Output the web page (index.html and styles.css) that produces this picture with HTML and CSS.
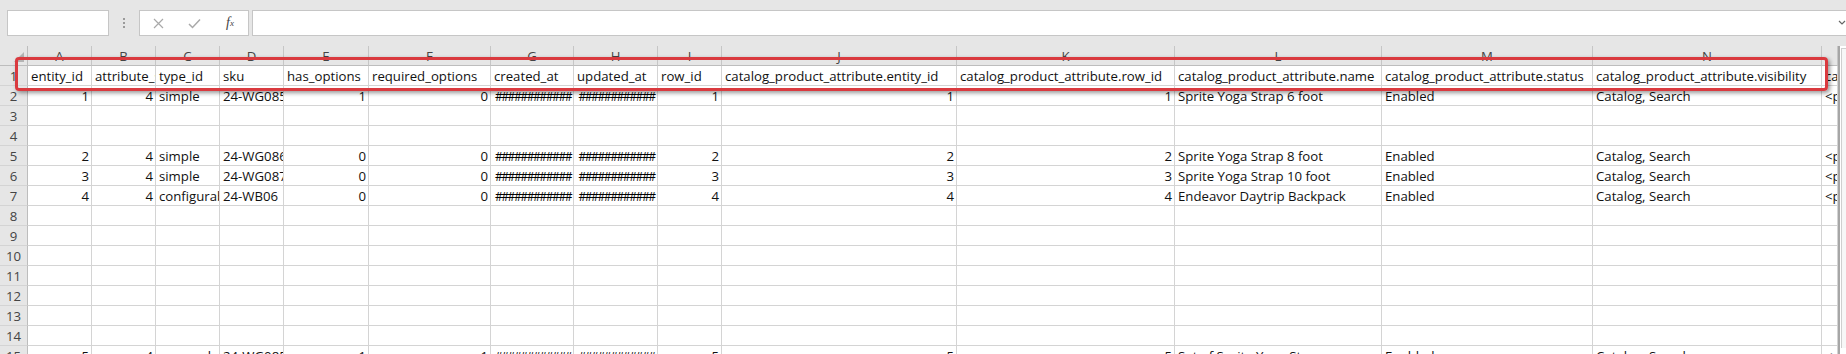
FILE: index.html
```html
<!DOCTYPE html>
<html lang="en">
<head>
  <meta charset="UTF-8" />
  <title>Book1 - Excel</title>
  <link rel="stylesheet" href="styles.css">
</head>
<body>

<div class="app">
  <!-- Formula bar -->
  <div class="formula-bar">
    <div class="name-box"></div>
    <div class="grip"><span></span><span></span><span></span></div>
    <div class="fx-buttons">
      <span class="fx-btn">
        <svg width="11" height="11" viewBox="0 0 11 11"><path d="M1 1 L10 10 M10 1 L1 10" stroke="#a9a9a9" stroke-width="1.2" fill="none"/></svg>
      </span>
      <span class="fx-btn">
        <svg width="13" height="11" viewBox="0 0 13 11"><path d="M1 6 L4.5 9.5 L12 1.5" stroke="#a9a9a9" stroke-width="1.5" fill="none"/></svg>
      </span>
      <span class="fx-btn fx">f<sub>x</sub></span>
    </div>
    <div class="formula-input">
      <svg width="8" height="6" viewBox="0 0 8 6"><path d="M1 1 L4 4 L7 1" stroke="#666" stroke-width="1.2" fill="none"/></svg>
    </div>
  </div>

  <!-- Sheet -->
  <div class="workspace">
    <div class="sheet" id="sheet"></div>
    <div class="vscroll"><div class="vscroll-btn"></div></div>
  </div>

  <!-- annotation -->
  <div class="highlight"></div>
</div>

<script>
  const sheet = document.getElementById("sheet");
  const letters = "ABCDEFGHIJKLMNO".split("");
  const H = "#";
  const data = {
    1: ["entity_id", "attribute_set_id", "type_id", "sku", "has_options", "required_options", "created_at", "updated_at", "row_id",
        "catalog_product_attribute.entity_id", "catalog_product_attribute.row_id", "catalog_product_attribute.name",
        "catalog_product_attribute.status", "catalog_product_attribute.visibility", "catalog_product_attribute.description"],
    2: [1, 4, "simple", "24-WG085", 1, 0, H, H, 1, 1, 1, "Sprite Yoga Strap 6 foot", "Enabled", "Catalog, Search", "<p>The Sprite Yoga Strap"],
    5: [2, 4, "simple", "24-WG086", 0, 0, H, H, 2, 2, 2, "Sprite Yoga Strap 8 foot", "Enabled", "Catalog, Search", "<p>The Sprite Yoga Strap"],
    6: [3, 4, "simple", "24-WG087", 0, 0, H, H, 3, 3, 3, "Sprite Yoga Strap 10 foot", "Enabled", "Catalog, Search", "<p>The Sprite Yoga Strap"],
    7: [4, 4, "configurable", "24-WB06", 0, 0, H, H, 4, 4, 4, "Endeavor Daytrip Backpack", "Enabled", "Catalog, Search", "<p>With more room"],
    15: [5, 4, "grouped", "24-WG085_Group", 1, 1, H, H, 5, 5, 5, "Set of Sprite Yoga Straps", "Enabled", "Catalog, Search", "<p>Great set of"]
  };

  function addCell(cls, text) {
    const d = document.createElement("div");
    d.className = "cell " + cls;
    d.textContent = text;
    sheet.appendChild(d);
  }

  // column headers (last one is cut by the window, its letter sits off screen)
  const corner = document.createElement("div");
  corner.className = "cell corner";
  corner.innerHTML = '<span class="select-all"></span>';
  sheet.appendChild(corner);
  letters.forEach((l, i) => addCell("col-head", i < letters.length - 1 ? l : ""));

  // rows
  for (let r = 1; r <= 15; r++) {
    addCell("row-head", r);
    const row = data[r] || [];
    for (let c = 0; c < letters.length; c++) {
      const v = row[c];
      if (v === undefined) addCell("", "");
      else if (v === H) addCell("hash", "############");
      else if (typeof v === "number") addCell("num", v);
      else addCell("text", v);
    }
  }
</script>

</body>
</html>
```

FILE: styles.css
```css
* { box-sizing: border-box; }

body {
  margin: 0;
  background: #fff;
  font-family: "Open Sans", sans-serif;
  font-size: 13.2px;
  color: #111;
  overflow: hidden;
}

.app {
  position: relative;
  width: 1846px;
  height: 354px;
  overflow: hidden;
}

/* formula bar */
.formula-bar {
  height: 46px;
  background: #e6e6e6;
  display: flex;
  align-items: flex-start;
  padding: 10px 0 0 7px;
}

.name-box {
  width: 102px;
  height: 26px;
  background: #fff;
  border: 1px solid #c6c6c6;
}

.grip {
  width: 30px;
  height: 26px;
  display: flex;
  flex-direction: column;
  align-items: center;
  justify-content: center;
  gap: 2px;
}

.grip span {
  width: 2px;
  height: 2px;
  background: #9a9a9a;
}

.fx-buttons {
  width: 110px;
  height: 26px;
  background: #fff;
  border: 1px solid #c6c6c6;
  display: flex;
  align-items: center;
}

.fx-btn {
  width: 36px;
  display: flex;
  justify-content: center;
  align-items: center;
}

.fx {
  font-family: "Liberation Serif", serif;
  font-style: italic;
  font-size: 14px;
  color: #444;
  line-height: 14px;
}

.fx sub {
  font-size: 9px;
  vertical-align: -1px;
}

.formula-input {
  flex-grow: 1;
  margin-left: 3px;
  height: 26px;
  background: #fff;
  border: 1px solid #c6c6c6;
  border-right: none;
  display: flex;
  justify-content: flex-end;
  align-items: center;
}

/* sheet grid */
.workspace {
  display: flex;
}

.sheet {
  width: 1838px;
  display: grid;
  grid-template-columns: 28px 64px 64px 64px 64px 85px 122px 83px 84px 64px 235px 218px 207px 211px 229px 16px;
  grid-auto-rows: 20px;
}

.cell {
  border-right: 1px solid #d4d4d4;
  border-bottom: 1px solid #d4d4d4;
  padding: 0 2px 0 3px;
  line-height: 20px;
  white-space: nowrap;
  overflow: hidden;
}

.num { text-align: right; }

.hash {
  text-align: center;
  font-size: 12px;
  letter-spacing: -1.4px;
  line-height: 21px;
  padding: 0 0 0 2px;
  color: #000;
}

.col-head, .row-head, .corner {
  background: #e6e6e6;
  color: #444;
  text-align: center;
  padding: 0;
}

.col-head {
  border-right-color: #c6c6c6;
  border-bottom-color: #bdbdbd;
}

.row-head {
  border-right-color: #bdbdbd;
  border-bottom-color: #d4d4d4;
}

.corner {
  display: flex;
  justify-content: flex-end;
  align-items: flex-end;
  padding: 0 3px 3px 0;
  border-right-color: #bdbdbd;
  border-bottom-color: #bdbdbd;
}

.select-all {
  width: 0;
  height: 0;
  border-left: 10px solid transparent;
  border-bottom: 10px solid #b4b4b4;
}

/* vertical scrollbar edge */
.vscroll {
  width: 8px;
  height: 308px;
  border-left: 2px solid #a6a6a6;
  background: #fff;
  padding: 2px 0 0 1px;
}

.vscroll-btn {
  height: 300px;
  border-left: 1px solid #cfcfcf;
  border-top: 1px solid #cfcfcf;
  background: #f7f7f7;
}

/* red annotation frame */
.highlight {
  position: absolute;
  left: 15px;
  top: 57px;
  width: 1813px;
  height: 34px;
  border: 3px solid #da3a3f;
  border-radius: 4px;
  box-shadow: 2px 2px 4px rgba(0, 0, 0, 0.4);
}
```
